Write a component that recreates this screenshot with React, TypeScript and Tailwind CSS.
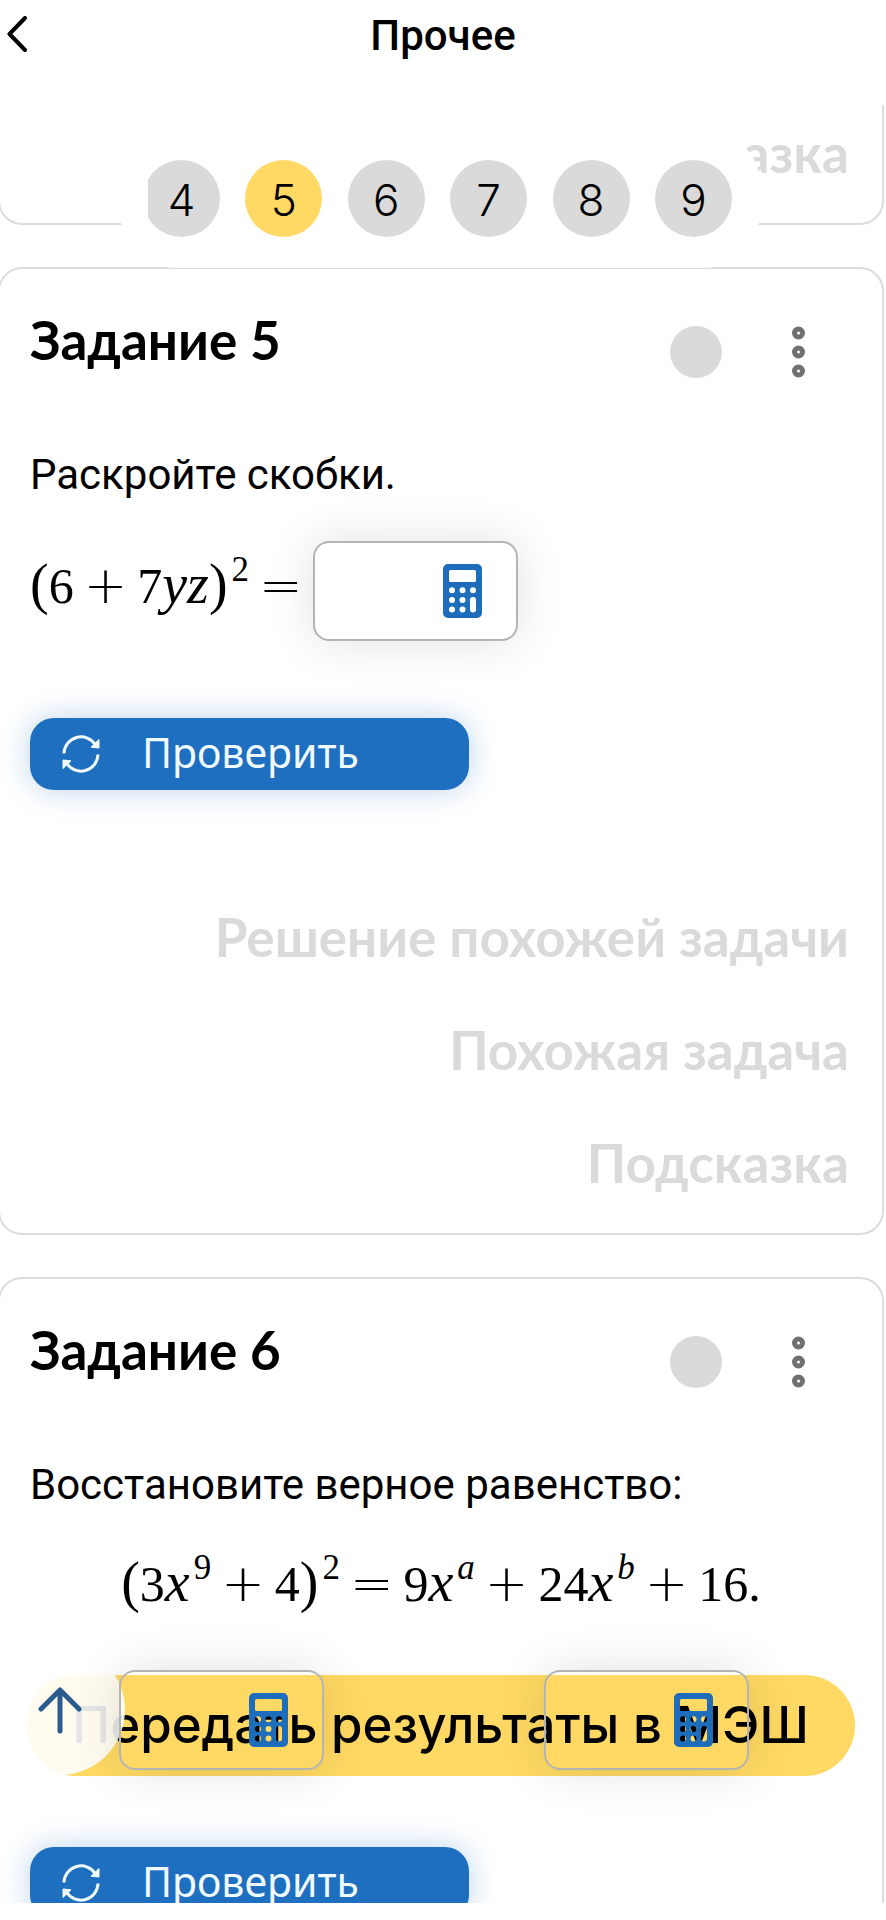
import type { ReactNode } from "react";

const steps = [4, 5, 6, 7, 8, 9];
const current = 5;

function CalcIcon() {
  return (
    <svg viewBox="0 0 39 54" className="h-[54px] w-[39px] fill-[#1e6dbb]" aria-hidden="true">
      <path
        fillRule="evenodd"
        d="M5 0h29a5 5 0 0 1 5 5v44a5 5 0 0 1-5 5H5a5 5 0 0 1-5-5V5a5 5 0 0 1 5-5zM7.500 6a1.500 1.500 0 0 0-1.500 1.500v9a1.500 1.500 0 0 0 1.500 1.500h24a1.500 1.500 0 0 0 1.500-1.500v-9a1.500 1.500 0 0 0-1.500-1.500z
        M6 26.200a3 3 0 1 0 6 0a3 3 0 1 0-6 0zM16.500 26.200a3 3 0 1 0 6 0a3 3 0 1 0-6 0zM27 26.200a3 3 0 1 0 6 0a3 3 0 1 0-6 0z
        M6 36a3 3 0 1 0 6 0a3 3 0 1 0-6 0zM16.500 36a3 3 0 1 0 6 0a3 3 0 1 0-6 0z
        M6 45.500a3 3 0 1 0 6 0a3 3 0 1 0-6 0zM16.500 45.500a3 3 0 1 0 6 0a3 3 0 1 0-6 0z
        M27 36v9.500a3 3 0 0 0 6 0V36a3 3 0 0 0-6 0z"
      />
    </svg>
  );
}

function SyncIcon() {
  return (
    <svg viewBox="0 0 38 40" className="h-10 w-[38px]" fill="none" stroke="#f0fbff" strokeWidth="3" aria-hidden="true">
      <path d="M2 19.500a17 17 0 0 1 31.500-8.500" />
      <path d="M36 20.500a17 17 0 0 1-31.500 8.500" />
      <path d="M37 5.500v8.500l-8-.8z" fill="#f0fbff" strokeWidth="1" />
      <path d="M1 34.500V26l8 .8z" fill="#f0fbff" strokeWidth="1" />
    </svg>
  );
}

function Op({ children }: { children: ReactNode }) {
  return <span className="mx-[10px] font-['DejaVu_Sans'] text-[52px] leading-none font-extralight">{children}</span>;
}

function Paren({ children }: { children: ReactNode }) {
  return <span className="text-[56px] leading-none">{children}</span>;
}

function Var({ children }: { children: ReactNode }) {
  return <i className="text-[56px] leading-none">{children}</i>;
}

function Sup({ children }: { children: ReactNode }) {
  return <sup className="-top-[22px] ml-1 text-[35px]">{children}</sup>;
}

function Formula({ children }: { children: ReactNode }) {
  return (
    <div className="flex h-[100px] items-baseline font-['Liberation_Serif',serif] text-[50px] leading-[90px] whitespace-nowrap">
      {children}
    </div>
  );
}

function AnswerBox({ label }: { label: string }) {
  return (
    <div className="flex h-[100px] w-[205px] items-center rounded-2xl border-2 border-[#b4b4b4] pr-[34px] shadow-[0_0_50px_rgba(0,0,0,0.12)]">
      <input
        type="text"
        aria-label={label}
        className="h-full min-w-0 flex-1 bg-transparent pl-4 font-['Liberation_Serif',serif] text-[42px] outline-none"
      />
      <button type="button" aria-label="Калькулятор">
        <CalcIcon />
      </button>
    </div>
  );
}

function CheckButton() {
  return (
    <button
      type="button"
      className="mt-[77px] ml-[30px] flex h-[72px] w-[439px] items-center rounded-3xl bg-[#1e6fc0] pl-8 text-left font-['Noto_Sans',sans-serif] text-[41px] leading-[56px] text-[#f0fbff] shadow-[0_0_30px_rgba(30,111,192,0.3)]"
    >
      <SyncIcon />
      <span className="ml-[42px] pb-1">Проверить</span>
    </button>
  );
}

function HintLink({ children }: { children: ReactNode }) {
  return (
    <a href="#" className="font-['Lato',sans-serif] text-[53px] leading-[113px] font-bold text-[#dadada]">
      {children}
    </a>
  );
}

function TaskHeader({ title }: { title: string }) {
  return (
    <div className="mt-[38px] flex h-[90px] pr-[77px] pl-[30px]">
      <h2 className="flex-1 font-['Lato',sans-serif] text-[53px] leading-[66px] font-bold">{title}</h2>
      <div className="flex items-center gap-[70px]">
        <span className="size-[52px] rounded-full bg-[#dadada]" />
        <button type="button" aria-label="Меню">
          <svg viewBox="0 0 13 52" className="h-[52px] w-[13px]" aria-hidden="true">
            {[7, 26, 45].map((cy) => (
              <circle key={cy} cx="6.500" cy={cy} r="4" fill="#fff" stroke="#707070" strokeWidth="5" />
            ))}
          </svg>
        </button>
      </div>
    </div>
  );
}

function Card({ children }: { children: ReactNode }) {
  return (
    <section className="relative z-10 mr-[2px] mb-[42px] -ml-[2px] flex shrink-0 flex-col rounded-3xl border-2 border-[#dcdcdc]">
      {children}
    </section>
  );
}

export default function App() {
  return (
    <div className="flex h-screen flex-col overflow-hidden bg-white pb-[17px] font-['Roboto',sans-serif] text-black">
      <header className="relative flex h-[105px] shrink-0 items-start justify-center pt-2">
        <button type="button" aria-label="Назад" className="absolute top-4 left-[6px]">
          <svg viewBox="0 0 22 36" className="h-9 w-[22px]" fill="none" stroke="#000" strokeWidth="4" strokeLinecap="round" strokeLinejoin="round">
            <path d="M19 2L3.500 18L19 34" />
          </svg>
        </button>
        <h1 className="text-[42px] leading-[56px] font-medium">Прочее</h1>
      </header>

      <main className="relative isolate flex min-h-0 flex-1 flex-col overflow-hidden">
        <nav className="absolute inset-x-0 top-6 z-20 flex justify-center pr-[6px]">
          <div className="w-[640px] rounded-[56px] bg-white px-[28px] py-[31px]">
            <div className="overflow-hidden">
              <div className="-ml-[5px] flex justify-between">
                {steps.map((n) => (
                  <button
                    key={n}
                    type="button"
                    className={`size-[77px] rounded-full pt-[2px] font-['Inter',sans-serif] text-[44px] leading-[60px] font-light ${
                      n === current ? "bg-[#ffd963]" : "bg-[#dadada]"
                    }`}
                  >
                    {n}
                  </button>
                ))}
              </div>
            </div>
          </div>
        </nav>

        <button
          type="button"
          className="absolute right-[31px] bottom-[127px] left-[26px] z-0 h-[101px] rounded-full bg-[#ffd963] font-['Inter',sans-serif] text-[51px] font-medium whitespace-nowrap"
        >
          Передать результаты в МЭШ
        </button>
        <button
          type="button"
          aria-label="Наверх"
          className="absolute bottom-[128px] -left-[5px] z-0 grid size-[130px] place-items-center rounded-full bg-white/90"
        >
          <svg viewBox="0 0 44 48" className="h-12 w-11" fill="none" stroke="#2a5c8e" strokeWidth="5" strokeLinecap="round" strokeLinejoin="round">
            <path d="M22 45V4M3 23L22 4l19 19" />
          </svg>
        </button>

        <section className="relative z-10 mr-[2px] mb-[42px] -ml-[2px] flex h-[120px] shrink-0 flex-col items-end justify-end rounded-b-3xl border-2 border-t-0 border-[#dcdcdc] pr-[33px] pb-[14px]">
          <HintLink>Подсказка</HintLink>
        </section>

        <Card>
          <TaskHeader title="Задание 5" />
          <p className="mt-[50px] pl-[30px] text-[42px] leading-[56px]">Раскройте скобки.</p>
          <div className="mt-[38px] flex pl-[30px]">
            <Formula>
              <Paren>(</Paren>6<Op>+</Op>7<Var>yz</Var>
              <Paren>)</Paren>
              <Sup>2</Sup>
              <Op>=</Op>
            </Formula>
            <AnswerBox label="Ответ" />
          </div>
          <CheckButton />
          <div className="mt-[90px] flex flex-col items-end pr-[33px] pb-[14px]">
            <HintLink>Решение похожей задачи</HintLink>
            <HintLink>Похожая задача</HintLink>
            <HintLink>Подсказка</HintLink>
          </div>
        </Card>

        <Card>
          <TaskHeader title="Задание 6" />
          <p className="mt-[50px] pl-[30px] text-[42px] leading-[56px]">Восстановите верное равенство:</p>
          <div className="mt-[26px] flex justify-center">
            <Formula>
              <Paren>(</Paren>3<Var>x</Var>
              <Sup>9</Sup>
              <Op>+</Op>4<Paren>)</Paren>
              <Sup>2</Sup>
              <Op>=</Op>9<Var>x</Var>
              <Sup><i>a</i></Sup>
              <Op>+</Op>24<Var>x</Var>
              <Sup><i>b</i></Sup>
              <Op>+</Op>16.
            </Formula>
          </div>
          <div className="mt-[31px] grid grid-cols-2 justify-items-center pr-[23px] pl-[9px]">
            <AnswerBox label="a" />
            <AnswerBox label="b" />
          </div>
          <CheckButton />
          <div className="h-[100px]" />
        </Card>
      </main>
    </div>
  );
}
